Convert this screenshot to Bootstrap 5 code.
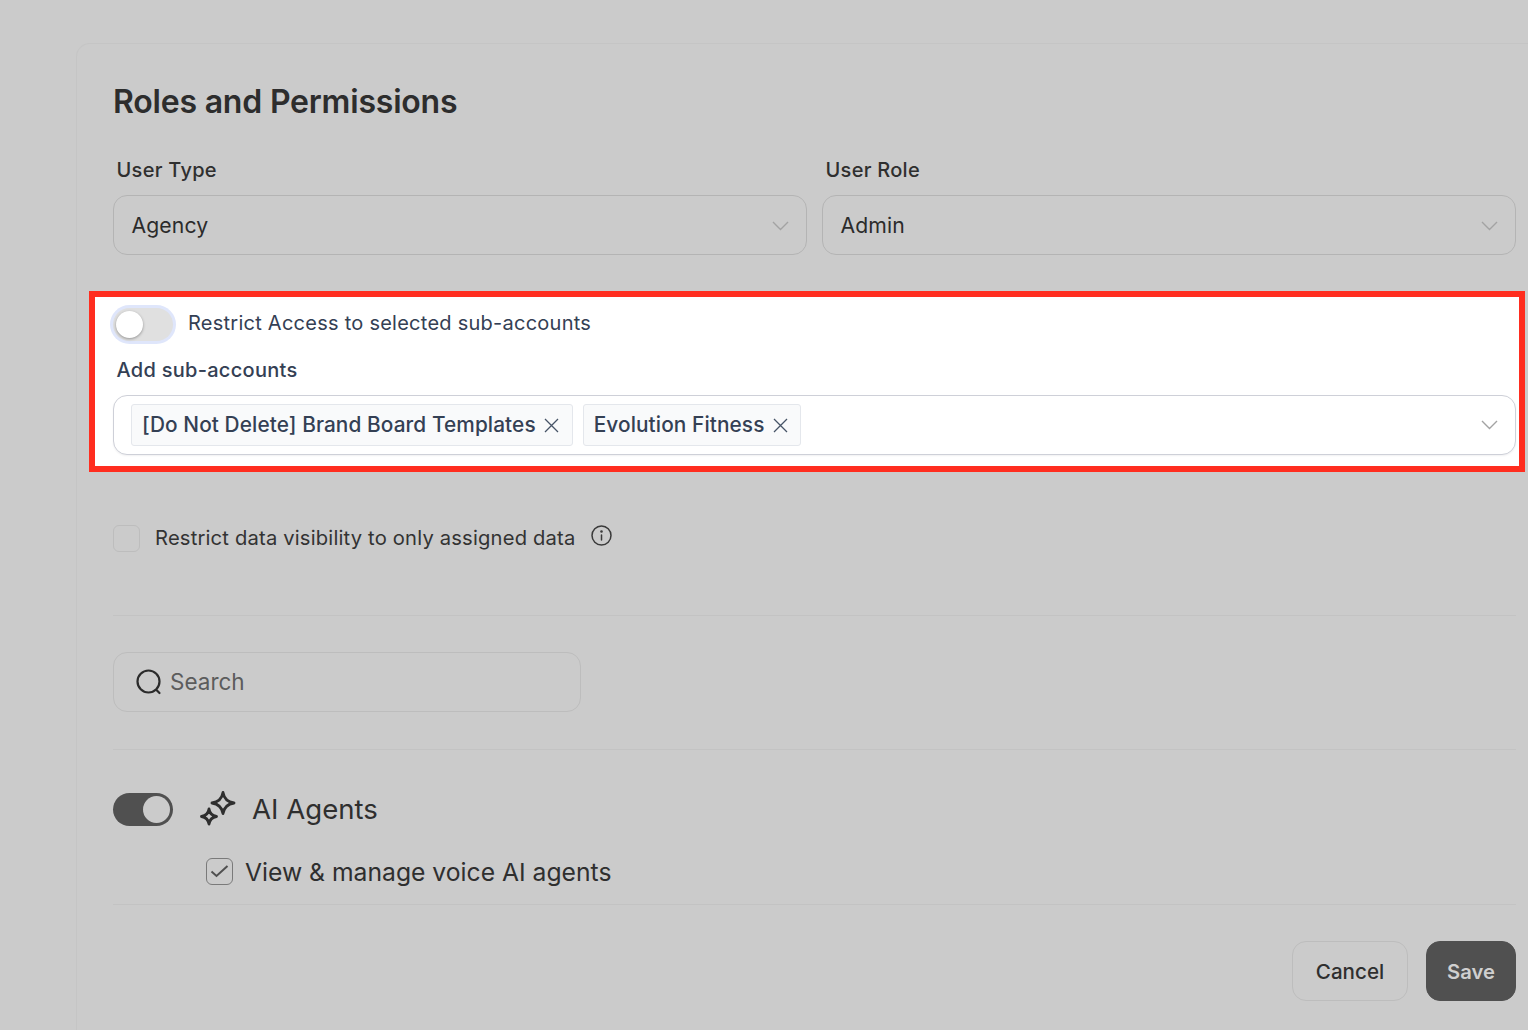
<!DOCTYPE html>
<html lang="en">
<head>
<meta charset="utf-8">
<title>Roles and Permissions</title>
<link rel="stylesheet" href="https://cdn.jsdelivr.net/npm/bootstrap@5.3.0/dist/css/bootstrap.min.css">
<style>
html,body{height:1030px;overflow:hidden}
body{background:#cbcbcb;font-family:Inter,"Liberation Sans",sans-serif;color:#2b2b2b;font-size:20px;margin:0}
.sheet{margin:43px 0 0 76px;height:987px;overflow:hidden;border:1px solid #c5c5c5;border-bottom:0;border-radius:14px 14px 0 0;padding:0 50px 0 36px;width:1491px}
.sheet-title{font-size:32px;font-weight:600;line-height:40px;margin:38px 0 0;color:#2d2d2d;letter-spacing:-.2px}
.field-label{font-size:20px;font-weight:500;line-height:28px;margin:0 0 11px 3.5px;letter-spacing:.28px;color:#2f2f2f}
.fields{margin-top:34px;gap:15px}
.fields>div{flex:1 1 0}
.pick{height:60px;border:1.5px solid #b4b4b4;border-radius:14px;padding:1px 17px 0 17.5px;font-size:21.2px;letter-spacing:.1px;color:#2b2b2b}
.chev{width:17px;height:10px;flex:none;stroke:#a3a3a3;fill:none;stroke-width:1.4}
.focus-box{margin:36px -9px 0 -24px;height:181px;background:#fff;border:6px solid #ff2d1f;padding:8px 3px 0 18px;color:#344054}
.toggle-off{width:60px;height:33px;border-radius:17px;background:#e0e0e0;box-shadow:0 0 0 3px #dfe6fb;position:relative;flex:none;margin-top:3px}
.toggle-off i{position:absolute;left:3px;top:3px;width:27px;height:27px;border-radius:50%;background:#fff;box-shadow:0 1px 3px rgba(0,0,0,.35)}
.toggle-text{margin:4px 0 0 15px;font-size:20px;line-height:28px;letter-spacing:.25px;color:#344054}
.sub-label{font-weight:500;font-size:20px;line-height:28px;margin:15px 0 11px 3.5px;letter-spacing:.28px;color:#344054}
.multi{height:60px;border:1.5px solid #ced0d8;border-radius:14px;padding:0 17px 0 17px;gap:10px;background:#fff;box-shadow:0 1px 2px rgba(16,24,40,.06)}
.chip{height:42px;background:#f9fafb;border:1px solid #e4e7ec;border-radius:3px;padding:0 12.5px 0 10px;font-size:20.8px;font-weight:500;color:#344054;gap:8.5px;letter-spacing:.1px}
.chip svg{width:15px;height:15px;stroke:#475467;stroke-width:1.3;fill:none}
.data-row{margin-top:52px;height:28px}
.box{width:27px;height:27px;border:1.5px solid #bdbdbd;border-radius:6px;flex:none}
.data-text{margin-left:15px;font-size:20.2px;letter-spacing:.18px;color:#333}
.info-mark{margin:-6px 0 0 15px}
.rule{height:1px;background:#c3c3c3;border:0;opacity:1;margin:0}
.rule-a{margin-top:63px}
.rule-b{margin-top:18px}
.find{width:468px;height:60px;border:1.5px solid #bdbdbd;border-radius:14px;padding:0 22px;font-size:22.5px;color:#5c5c5c;margin:36px 0 37px}
.toggle-on{width:60px;height:33px;border-radius:17px;background:#505050;position:relative;flex:none}
.toggle-on i{position:absolute;right:3px;top:3px;width:27px;height:27px;border-radius:50%;background:#cbcbcb}
.agents{margin-top:41px;height:36px}
.spark{margin-left:27px}
.agents-title{font-size:27.6px;margin-left:16px;padding-top:2px;color:#2f2f2f}
.perm{margin:29px 0 0 93px;height:30px}
.box-on{width:27px;height:27px;border:1.5px solid #7a7a7a;border-radius:6px;flex:none;display:flex;align-items:center;justify-content:center}
.perm-text{margin-left:12px;padding-top:3px;font-size:24.7px;color:#2f2f2f}
.actions{margin-top:36px;gap:18px}
.actions .btn{height:60px;border-radius:14px;font-size:20.6px;font-weight:500;padding:2px 0 0;display:flex;align-items:center;justify-content:center}
.btn-ghost{width:116px;border:1.5px solid #bdbdbd;color:#2f2f2f;background:transparent}
.actions .btn-dark-solid{width:90px;background:#505050;border:1px solid #505050;color:#cfcfcf;font-weight:600;font-size:20.2px}
</style>
</head>
<body>
<div class="sheet">
  <h1 class="sheet-title">Roles and Permissions</h1>
  <div class="d-flex fields">
    <div>
      <div class="field-label">User Type</div>
      <div class="pick d-flex align-items-center justify-content-between"><span>Agency</span><svg class="chev" viewBox="0 0 17 10"><path d="M1 1l7.500 7.500L16 1"/></svg></div>
    </div>
    <div>
      <div class="field-label">User Role</div>
      <div class="pick d-flex align-items-center justify-content-between"><span>Admin</span><svg class="chev" viewBox="0 0 17 10"><path d="M1 1l7.500 7.500L16 1"/></svg></div>
    </div>
  </div>
  <div class="focus-box">
    <div class="d-flex align-items-start">
      <span class="toggle-off"><i></i></span>
      <span class="toggle-text">Restrict Access to selected sub-accounts</span>
    </div>
    <div class="sub-label">Add sub-accounts</div>
    <div class="multi d-flex align-items-center">
      <span class="chip d-inline-flex align-items-center">[Do Not Delete] Brand Board Templates <svg viewBox="0 0 15 15"><path d="M1 1l13 13M14 1L1 14"/></svg></span>
      <span class="chip d-inline-flex align-items-center">Evolution Fitness <svg viewBox="0 0 15 15"><path d="M1 1l13 13M14 1L1 14"/></svg></span>
      <svg class="chev ms-auto" viewBox="0 0 17 10"><path d="M1 1l7.500 7.500L16 1"/></svg>
    </div>
  </div>
  <div class="data-row d-flex align-items-center">
    <span class="box"></span>
    <span class="data-text">Restrict data visibility to only assigned data</span>
    <svg class="info-mark" width="21" height="21" viewBox="0 0 21 21" fill="none" stroke="#3a3a3a" stroke-width="1.5"><circle cx="10.500" cy="10.500" r="9.500"/><path d="M10.500 10v5" stroke-linecap="round"/><circle cx="10.500" cy="6.500" r=".6" fill="#3a3a3a"/></svg>
  </div>
  <hr class="rule rule-a">
  <div class="find d-flex align-items-center">
    <svg width="26" height="26" viewBox="0 0 26 26" fill="none" stroke="#2b2b2b" stroke-width="2.200" class="me-2"><circle cx="12.500" cy="12.500" r="11"/><path d="M20.500 21l3 3" stroke-linecap="round"/></svg>
    <span>Search</span>
  </div>
  <hr class="rule">
  <div class="agents d-flex align-items-center">
    <span class="toggle-on"><i></i></span>
    <svg class="spark" width="36" height="36" viewBox="0 0 36 36" fill="none" stroke="#2f2f2f" stroke-width="2.800" stroke-linejoin="round"><path d="M23 1.500Q24.500 10.500 34 12 24.500 13.500 23 22.500 21.500 13.500 12 12 21.500 10.500 23 1.500z"/><path d="M9 18Q10 24.500 16.500 25.500 10 26.500 9 33 8 26.500 1.500 25.500 8 24.500 9 18z"/></svg>
    <span class="agents-title">AI Agents</span>
  </div>
  <div class="perm d-flex align-items-center">
    <span class="box-on"><svg width="19" height="14" viewBox="0 0 19 14" fill="none" stroke="#505050" stroke-width="2"><path d="M1.500 7.500l5 4.500L17.500 2"/></svg></span>
    <span class="perm-text">View &amp; manage voice AI agents</span>
  </div>
  <hr class="rule rule-b">
  <div class="actions d-flex justify-content-end">
    <button class="btn btn-ghost" type="button">Cancel</button>
    <button class="btn btn-dark-solid" type="button">Save</button>
  </div>
</div>
</body>
</html>
